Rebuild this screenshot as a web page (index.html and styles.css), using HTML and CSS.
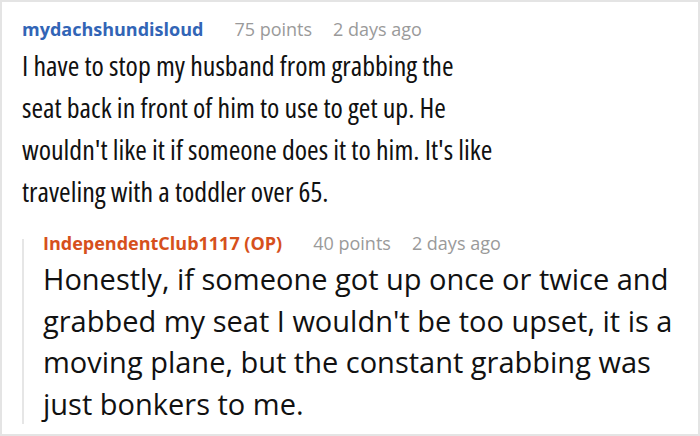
FILE: index.html
```html
<!DOCTYPE html>
<html>
<head>
<meta charset="utf-8">
<link rel="stylesheet" href="styles.css">
</head>
<body>
<div class="frame">
  <div class="comment">
    <div class="meta">
      <span class="user user-blue">mydachshundisloud</span>
      <span class="info">75 points</span>
      <span class="info">2 days ago</span>
    </div>
    <p class="text text-condensed">I have to stop my husband from grabbing the<br>seat back in front of him to use to get up. He<br>wouldn't like it if someone does it to him. It's like<br>traveling with a toddler over 65.</p>
    <div class="reply">
      <div class="meta">
        <span class="user user-orange">IndependentClub1117 (OP)</span>
        <span class="info">40 points</span>
        <span class="info">2 days ago</span>
      </div>
      <p class="text text-reply">Honestly, if someone got up once or twice and grabbed my seat I wouldn't be too upset, it is a moving plane, but the constant grabbing was just bonkers to me.</p>
    </div>
  </div>
</div>
</body>
</html>
```
FILE: styles.css
```css
html, body {
  margin: 0;
  padding: 0;
  background: #ffffff;
}
.frame {
  width: 700px;
  height: 436px;
  box-sizing: border-box;
  border: 2px solid #e4e4e4;
  overflow: hidden;
  font-family: "Open Sans", "Noto Sans", sans-serif;
  color: #111;
}
.comment {
  padding: 15px 0 0 20px;
}
.meta {
  display: flex;
  gap: 21px;
  font-size: 18px;
  line-height: 24px;
}
.user {
  font-weight: 700;
  margin-right: 10px;
}
.user-blue { color: #3265b6; }
.user-orange { color: #d6501c; }
.info { color: #9a9a9a; }
.text {
  margin: 0;
}
.text-condensed {
  font-size: 28px;
  line-height: 42px;
  font-stretch: 75%;
  white-space: nowrap;
  margin-top: 3px;
}
.reply {
  margin-top: 19px;
  padding-left: 21px;
  background: linear-gradient(#e6e6e6, #e6e6e6) no-repeat 0 8px / 2px calc(100% - 8px);
}
.text-reply {
  font-size: 29px;
  line-height: 41.5px;
  width: 640px;
  margin-top: 3px;
}
```
